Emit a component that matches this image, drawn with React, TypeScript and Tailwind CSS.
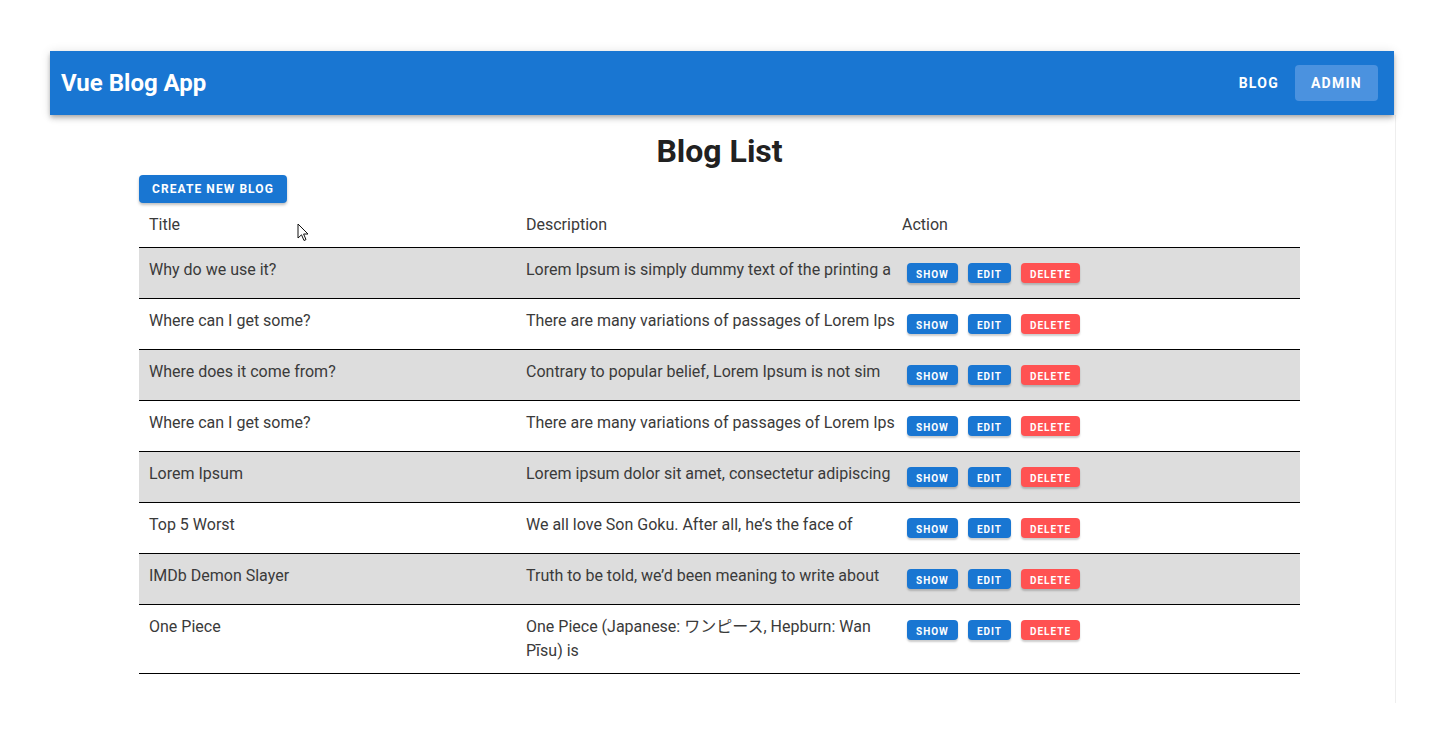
import React from "react";

const blogs = [
  { title: "Why do we use it?", desc: "Lorem Ipsum is simply dummy text of the printing a" },
  { title: "Where can I get some?", desc: "There are many variations of passages of Lorem Ips" },
  { title: "Where does it come from?", desc: "Contrary to popular belief, Lorem Ipsum is not sim" },
  { title: "Where can I get some?", desc: "There are many variations of passages of Lorem Ips" },
  { title: "Lorem Ipsum", desc: "Lorem ipsum dolor sit amet, consectetur adipiscing" },
  { title: "Top 5 Worst", desc: "We all love Son Goku. After all, he’s the face of" },
  { title: "IMDb Demon Slayer", desc: "Truth to be told, we’d been meaning to write about" },
];

function SmallBtn({ label, red }: { label: string; red?: boolean }) {
  return (
    <button
      className={
        "h-5 px-[9px] rounded-[4px] text-white text-[10px] font-bold tracking-[0.1em] uppercase shadow-[0_2px_2px_rgba(0,0,0,0.2)] " +
        (red ? "bg-[#ff5252]" : "bg-[#1976d2]")
      }
    >
      {label}
    </button>
  );
}

function Actions() {
  return (
    <div className="flex gap-[10px] p-[5px]">
      <SmallBtn label="Show" />
      <SmallBtn label="Edit" />
      <SmallBtn label="Delete" red />
    </div>
  );
}

export default function App() {
  return (
    <div className="min-h-screen bg-white pt-[51px] pl-[50px] font-['Roboto',sans-serif]">
      <div className="w-[1346px] relative">
        {/* top bar */}
        <header className="relative z-10 w-[1344px] h-16 bg-[#1976d2] flex items-center justify-between pl-[11px] pr-4 shadow-[0_2px_4px_-1px_rgba(0,0,0,0.2),0_4px_5px_0_rgba(0,0,0,0.14),0_1px_10px_0_rgba(0,0,0,0.12)]">
          <div className="text-white text-2xl font-bold">Vue Blog App</div>
          <nav className="flex">
            <button className="h-9 px-4 rounded text-white text-sm font-bold tracking-[0.09em]">BLOG</button>
            <button className="h-9 px-4 rounded text-white text-sm font-bold tracking-[0.09em] bg-[#4b92df]">ADMIN</button>
          </nav>
        </header>

        {/* page body */}
        <main className="h-[588px] border-r border-[#eeeeee] pl-[89px] pt-4">
          <h1 className="w-[1161px] text-center text-[32px] leading-[40px] font-bold text-[#212121] mb-1">Blog List</h1>
          <button className="h-[28px] px-[13px] rounded-[4px] bg-[#1976d2] text-white text-xs font-bold tracking-[0.09em] shadow-[0_2px_3px_rgba(0,0,0,0.25)]">
            CREATE NEW BLOG
          </button>
          <table className="w-[1161px] table-fixed border-collapse text-base leading-6 text-[#3a3a3a]">
            <colgroup>
              <col className="w-[377px]" />
              <col className="w-[376px]" />
              <col className="w-[408px]" />
            </colgroup>
            <thead>
              <tr className="border-b border-black">
                <th className="p-[10px] text-left font-normal">Title</th>
                <th className="p-[10px] text-left font-normal">Description</th>
                <th className="p-[10px] text-left font-normal">Action</th>
              </tr>
            </thead>
            <tbody>
              {blogs.map((b, i) => (
                <tr key={i} className={"border-b border-black " + (i % 2 === 0 ? "bg-[#dddddd]" : "bg-white")}>
                  <td className="p-[10px] align-top">{b.title}</td>
                  <td className="pl-[10px] pr-0 py-[10px] align-top whitespace-nowrap">{b.desc}</td>
                  <td className="px-[10px] py-[10px] align-top">
                    <Actions />
                  </td>
                </tr>
              ))}
              <tr className="border-b border-black bg-white">
                <td className="p-[10px] align-top">One Piece</td>
                <td className="pl-[10px] pr-0 py-[10px] align-top font-['Roboto','Noto_Sans_CJK_JP',sans-serif]">
                  One Piece (Japanese: ワンピース, Hepburn: Wan
                  <br />
                  Pīsu) is
                </td>
                <td className="px-[10px] py-[10px] align-top">
                  <Actions />
                </td>
              </tr>
            </tbody>
          </table>
        </main>

        {/* mouse pointer captured in screenshot */}
        <svg className="absolute left-[247px] top-[172px]" width="12" height="19" viewBox="0 0 12 19">
          <path d="M1 1 L1 15 L4.5 11.8 L7 17.5 L9 16.6 L6.6 11 L11 11 Z" fill="white" stroke="#111" strokeWidth="1" strokeLinejoin="round" />
        </svg>
      </div>
    </div>
  );
}
